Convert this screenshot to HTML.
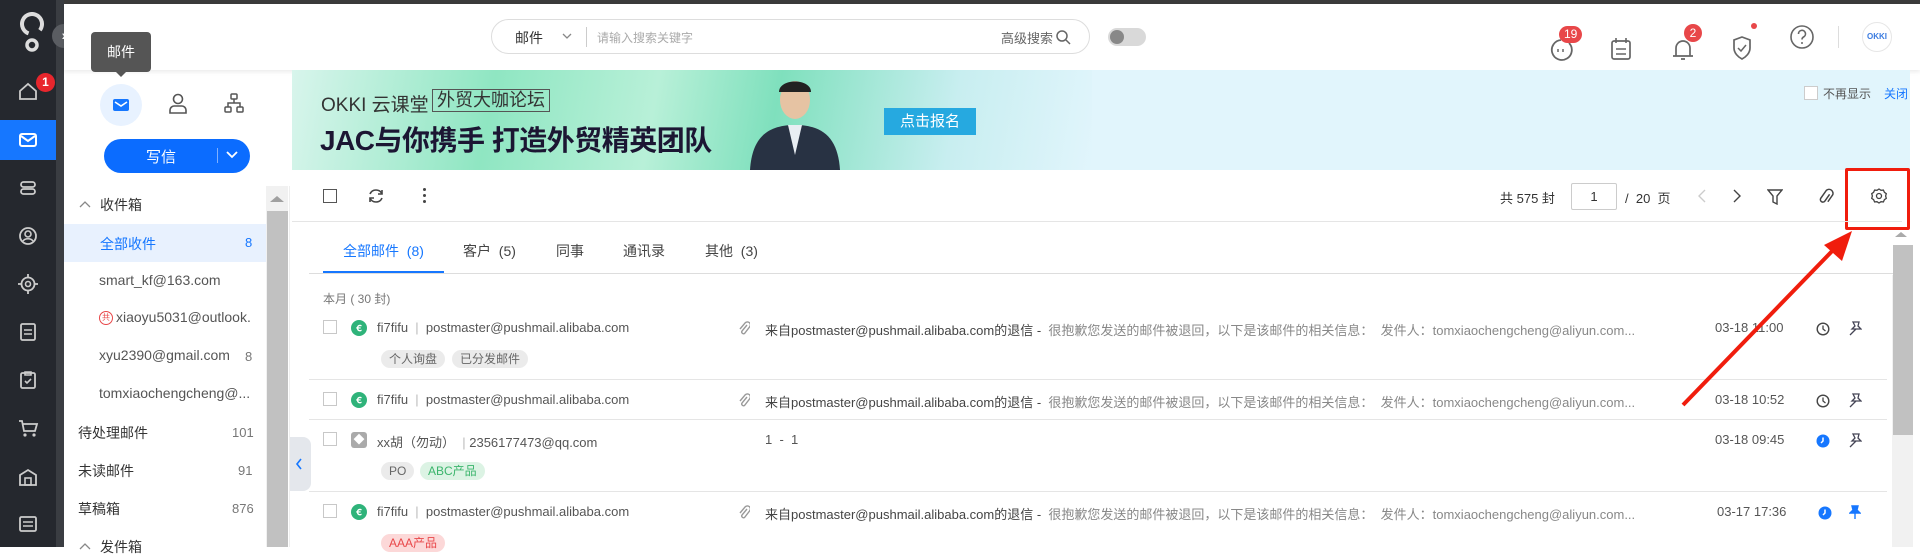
<!DOCTYPE html>
<html><head><meta charset="utf-8"><style>
*{margin:0;padding:0;box-sizing:border-box}
body{width:1920px;height:547px;overflow:hidden;background:#fff;font-family:"Liberation Sans","Noto Sans CJK SC",sans-serif;color:#333;position:relative}
.a{position:absolute;white-space:nowrap}
.nav{left:0;top:0;width:56px;height:547px;background:#25282e}
.navs{left:56px;top:0;width:8px;height:547px;background:#3a3d42}
.ni{position:absolute;left:17px;width:22px;height:22px}
.sb{font-size:14px;color:#333}
.cnt{font-size:13px;color:#777}
.t13{font-size:13px;color:#555}
.cb{position:absolute;width:14px;height:14px;border:1px solid #c8c8c8;background:#fff}
.tag{position:absolute;height:18px;line-height:18px;font-size:12px;border-radius:9px;padding:0 8px;background:#ebebeb;color:#666}
.sep{position:absolute;left:309px;width:1578px;height:1px;background:#e5e5e5}
.av{position:absolute;width:16px;height:16px;border-radius:50%;background:#2fb37a;color:#fff;font-size:11px;font-weight:bold;text-align:center;line-height:16px}
</style></head><body>
<div class="a" style="left:0;top:0;width:1920px;height:4px;background:#3b3b3b"></div>
<div class="a nav"></div><div class="a navs"></div>
<svg class="a" style="left:18px;top:12px" width="28" height="40" viewBox="0 0 28 40"><circle cx="14" cy="12" r="10" fill="none" stroke="#ddd" stroke-width="4" stroke-dasharray="50 13" transform="rotate(110 14 12)"/><circle cx="14" cy="33" r="5" fill="none" stroke="#ddd" stroke-width="3.5"/></svg>
<div class="a" style="left:52px;top:24px;width:24px;height:24px;border-radius:50%;background:#5a5d62;color:#fff;font-size:14px;text-align:center;line-height:23px;font-weight:bold">›</div>
<svg class="ni" style="top:80px" viewBox="0 0 22 22"><path d="M3 11L11 4l8 7v8H3z" fill="none" stroke="#ccc" stroke-width="1.8"/></svg>
<div class="a" style="left:36px;top:73px;width:19px;height:19px;border-radius:50%;background:#e8262d;color:#fff;font-size:12px;text-align:center;line-height:19px;font-weight:bold">1</div>
<div class="a" style="left:0;top:120px;width:56px;height:40px;background:#1677ff"></div>
<svg class="ni" style="top:129px" viewBox="0 0 22 22"><rect x="3" y="5" width="16" height="12" rx="2" fill="none" stroke="#fff" stroke-width="2"/><path d="M4 7l7 5 7-5" fill="none" stroke="#fff" stroke-width="2"/></svg>
<svg class="ni" style="top:177px" viewBox="0 0 22 22"><rect x="4" y="5" width="14" height="5" rx="2.5" fill="none" stroke="#ccc" stroke-width="1.8"/><rect x="4" y="12" width="14" height="5" rx="2.5" fill="none" stroke="#ccc" stroke-width="1.8"/></svg>
<svg class="ni" style="top:225px" viewBox="0 0 22 22"><circle cx="11" cy="11" r="8" fill="none" stroke="#ccc" stroke-width="1.8"/><circle cx="11" cy="9" r="3" fill="none" stroke="#ccc" stroke-width="1.6"/><path d="M6 16c2-3 8-3 10 0" fill="none" stroke="#ccc" stroke-width="1.6"/></svg>
<svg class="ni" style="top:273px" viewBox="0 0 22 22"><circle cx="11" cy="11" r="6.5" fill="none" stroke="#ccc" stroke-width="1.8"/><circle cx="11" cy="11" r="2.5" fill="none" stroke="#ccc" stroke-width="1.6"/><path d="M11 1v3M11 18v3M1 11h3M18 11h3" stroke="#ccc" stroke-width="1.8"/></svg>
<svg class="ni" style="top:321px" viewBox="0 0 22 22"><rect x="4" y="3" width="14" height="16" rx="1.5" fill="none" stroke="#ccc" stroke-width="1.8"/><path d="M7 9h8M7 13h8" stroke="#ccc" stroke-width="1.6"/></svg>
<svg class="ni" style="top:369px" viewBox="0 0 22 22"><rect x="4" y="4" width="14" height="15" rx="1.5" fill="none" stroke="#ccc" stroke-width="1.8"/><path d="M8 3h6v3H8zM8 12l2 2 4-4" fill="none" stroke="#ccc" stroke-width="1.6"/></svg>
<svg class="ni" style="top:417px" viewBox="0 0 22 22"><path d="M2 4h3l2 10h11l2-7H6" fill="none" stroke="#ccc" stroke-width="1.8"/><circle cx="8" cy="18" r="1.6" fill="#ccc"/><circle cx="17" cy="18" r="1.6" fill="#ccc"/></svg>
<svg class="ni" style="top:466px" viewBox="0 0 22 22"><path d="M3 9l8-5 8 5v10H3z" fill="none" stroke="#ccc" stroke-width="1.8"/><rect x="8" y="12" width="6" height="7" fill="none" stroke="#ccc" stroke-width="1.6"/></svg>
<svg class="ni" style="top:513px" viewBox="0 0 22 22"><rect x="3" y="4" width="16" height="14" rx="1.5" fill="none" stroke="#ccc" stroke-width="1.8"/><path d="M6 9h10M6 13h10" stroke="#ccc" stroke-width="1.6"/></svg>
<div class="a" style="left:64px;top:4px;width:1856px;height:66px;background:#fff;box-shadow:0 2px 4px rgba(0,0,0,.08)"></div>
<div class="a" style="left:491px;top:19px;width:599px;height:35px;border:1px solid #ddd;border-radius:18px"></div>
<div class="a" style="left:515px;top:28px;font-size:14px;color:#333">邮件</div>
<svg class="a" style="left:562px;top:32px" width="10" height="8"><path d="M1 2l4 4 4-4" fill="none" stroke="#888" stroke-width="1.3"/></svg>
<div class="a" style="left:586px;top:27px;width:1px;height:20px;background:#ccc"></div>
<div class="a" style="left:597px;top:29px;font-size:12px;color:#aaa">请输入搜索关键字</div>
<div class="a" style="left:1001px;top:28px;font-size:13px;color:#666">高级搜索</div>
<svg class="a" style="left:1055px;top:29px" width="16" height="16"><circle cx="7" cy="7" r="5" fill="none" stroke="#666" stroke-width="1.5"/><path d="M11 11l4 4" stroke="#666" stroke-width="1.5"/></svg>
<div class="a" style="left:1108px;top:28px;width:38px;height:18px;border-radius:9px;background:#d9d9d9"></div>
<div class="a" style="left:1110px;top:30px;width:14px;height:14px;border-radius:50%;background:#888"></div>
<svg class="a" style="left:1549px;top:37px" width="24" height="26"><path d="M20 6a10 10 0 1 1-8-3" fill="none" stroke="#666" stroke-width="1.8"/><path d="M9 12v3M14 12v3" stroke="#666" stroke-width="1.5"/></svg>
<div class="a" style="left:1559px;top:26px;height:17px;padding:0 5px;border-radius:9px;background:#e84749;color:#fff;font-size:12px;line-height:17px">19</div>
<svg class="a" style="left:1610px;top:37px" width="22" height="24"><rect x="2" y="4" width="18" height="18" rx="2" fill="none" stroke="#666" stroke-width="1.7"/><path d="M6 1v5M16 1v5M6 12h10M6 17h10" stroke="#666" stroke-width="1.6"/></svg>
<svg class="a" style="left:1671px;top:36px" width="24" height="26"><path d="M5 20V12a7 7 0 0 1 14 0v8zM2 20h20M10 23h4" fill="none" stroke="#666" stroke-width="1.7"/></svg>
<div class="a" style="left:1684px;top:24px;width:18px;height:18px;border-radius:50%;background:#e84749;color:#fff;font-size:12px;text-align:center;line-height:18px">2</div>
<svg class="a" style="left:1731px;top:35px" width="22" height="26"><path d="M11 2l8 3v8c0 5-4 9-8 11-4-2-8-6-8-11V5z" fill="none" stroke="#666" stroke-width="1.7"/><path d="M7 13l3 3 5-6" fill="none" stroke="#666" stroke-width="1.5"/></svg>
<div class="a" style="left:1751px;top:23px;width:6px;height:6px;border-radius:50%;background:#e84749"></div>
<svg class="a" style="left:1789px;top:24px" width="26" height="26"><circle cx="13" cy="13" r="11" fill="none" stroke="#666" stroke-width="1.6"/><path d="M9.5 10a3.5 3.5 0 1 1 5 3c-1.2.7-1.5 1.3-1.5 2.5" fill="none" stroke="#666" stroke-width="1.6"/><circle cx="13" cy="19" r="1" fill="#666"/></svg>
<div class="a" style="left:1838px;top:26px;width:1px;height:22px;background:#ddd"></div>
<div class="a" style="left:1862px;top:22px;width:30px;height:30px;border-radius:50%;border:1px solid #e6e6e6;color:#3a7be0;font-size:8px;font-weight:bold;text-align:center;line-height:28px">OKKI</div>
<div class="a" style="left:91px;top:32px;width:60px;height:40px;background:#555;border-radius:4px;color:#fff;font-size:14px;text-align:center;line-height:40px">邮件</div>
<div class="a" style="left:116px;top:72px;border:5px solid transparent;border-top-color:#555"></div>
<div class="a" style="left:100px;top:84px;width:42px;height:42px;border-radius:50%;background:#e8f2ff"></div>
<svg class="a" style="left:112px;top:97px" width="18" height="16"><rect x="1" y="2" width="16" height="12" rx="2" fill="#1677ff"/><path d="M3 5l6 4 6-4" fill="none" stroke="#fff" stroke-width="1.6"/></svg>
<svg class="a" style="left:168px;top:93px" width="20" height="22"><circle cx="10" cy="6" r="4.5" fill="none" stroke="#555" stroke-width="1.6"/><path d="M2 20v-3c0-2 2-4 4-4h8c2 0 4 2 4 4v3z" fill="none" stroke="#555" stroke-width="1.6"/></svg>
<svg class="a" style="left:224px;top:93px" width="20" height="20"><rect x="7" y="1" width="6" height="5" rx="1" fill="none" stroke="#555" stroke-width="1.5"/><rect x="1" y="14" width="6" height="5" rx="1" fill="none" stroke="#555" stroke-width="1.5"/><rect x="13" y="14" width="6" height="5" rx="1" fill="none" stroke="#555" stroke-width="1.5"/><path d="M10 6v4M4 14v-4h12v4" fill="none" stroke="#555" stroke-width="1.5"/></svg>
<div class="a" style="left:104px;top:139px;width:146px;height:34px;border-radius:17px;background:#0b6cff"></div>
<div class="a" style="left:146px;top:146px;color:#fff;font-size:15px">写信</div>
<div class="a" style="left:217px;top:148px;width:1px;height:15px;background:#7fb0ff"></div>
<svg class="a" style="left:226px;top:151px" width="12" height="8"><path d="M1 1l5 5 5-5" fill="none" stroke="#fff" stroke-width="1.8"/></svg>
<svg class="a" style="left:79px;top:200px" width="12" height="8"><path d="M1 7l5-5 5 5" fill="none" stroke="#888" stroke-width="1.3"/></svg>
<div class="a sb" style="left:100px;top:195px">收件箱</div>
<div class="a" style="left:64px;top:224px;width:202px;height:38px;background:#e8f1fe"></div>
<div class="a sb" style="left:100px;top:234px;color:#1677ff">全部收件</div>
<div class="a cnt" style="left:245px;top:235px;color:#1677ff">8</div>
<div class="a sb" style="left:99px;top:272px;color:#555">smart_kf@163.com</div>
<div class="a" style="left:99px;top:311px;width:14px;height:14px;border-radius:50%;border:1.5px solid #e84749;color:#e84749;font-size:8px;text-align:center;line-height:11px">共</div>
<div class="a sb" style="left:116px;top:309px;color:#555;width:135px;overflow:hidden">xiaoyu5031@outlook.com</div>
<div class="a sb" style="left:99px;top:347px;color:#555">xyu2390@gmail.com</div>
<div class="a cnt" style="left:245px;top:349px">8</div>
<div class="a sb" style="left:99px;top:385px;color:#555">tomxiaochengcheng@...</div>
<div class="a sb" style="left:78px;top:423px">待处理邮件</div><div class="a cnt" style="left:232px;top:425px">101</div>
<div class="a sb" style="left:78px;top:461px">未读邮件</div><div class="a cnt" style="left:238px;top:463px">91</div>
<div class="a sb" style="left:78px;top:499px">草稿箱</div><div class="a cnt" style="left:232px;top:501px">876</div>
<svg class="a" style="left:79px;top:542px" width="12" height="8"><path d="M1 7l5-5 5 5" fill="none" stroke="#888" stroke-width="1.3"/></svg>
<div class="a sb" style="left:100px;top:537px">发件箱</div>
<div class="a" style="left:266px;top:186px;width:22px;height:361px;background:#f1f1f1"></div>
<div class="a" style="left:270px;top:196px;border:7px solid transparent;border-bottom:6px solid #a0a0a0;border-top:0"></div>
<div class="a" style="left:267px;top:211px;width:21px;height:336px;background:#c1c1c1"></div>
<div class="a" style="left:289px;top:186px;width:1px;height:361px;background:#eee"></div>
<!-- banner -->
<div class="a" style="left:292px;top:70px;width:1618px;height:100px;background:#e1f5fc"></div>
<div class="a" style="left:292px;top:70px;width:800px;height:100px;background:linear-gradient(100deg,#d8f5ec 0%,#8fe6c2 25%,#b8f0d8 45%,#7fe0bd 60%,#c8eef0 82%,#e1f5fc 100%)"></div>
<div class="a" style="left:321px;top:90px;font-size:19px;color:#333">OKKI 云课堂</div>
<div class="a" style="left:432px;top:89px;height:23px;border:1px solid #555;font-size:18px;line-height:21px;padding:0 4px;color:#333">外贸大咖论坛</div>
<div class="a" style="left:320px;top:119px;font-size:28px;font-weight:bold;color:#1c1633;letter-spacing:-0.5px">JAC与你携手 打造外贸精英团队</div>
<svg class="a" style="left:745px;top:72px" width="100" height="98"><ellipse cx="50" cy="28" rx="15" ry="19" fill="#e6c3a3"/><path d="M34 20c0-14 32-14 32 0" fill="#222"/><path d="M5 98c2-30 15-45 45-45s43 15 45 45z" fill="#283243"/><path d="M43 53l7 30 7-30z" fill="#e9eef3"/></svg>
<div class="a" style="left:884px;top:108px;width:92px;height:27px;background:#26a9e0;color:#fff;font-size:15px;text-align:center;line-height:27px">点击报名</div>
<div class="a cb" style="left:1804px;top:86px;border-color:#ccc"></div>
<div class="a" style="left:1823px;top:85px;font-size:12px;color:#555">不再显示</div>
<div class="a" style="left:1884px;top:85px;font-size:12px;color:#1677ff">关闭</div>
<!-- toolbar -->
<div class="a cb" style="left:323px;top:189px;border:1.5px solid #555"></div>
<svg class="a" style="left:367px;top:187px" width="18" height="18"><path d="M15 7a6.5 6.5 0 0 0-12 0M3 11a6.5 6.5 0 0 0 12 0" fill="none" stroke="#444" stroke-width="1.6"/><path d="M15 3v4h-4M3 15v-4h4" fill="none" stroke="#444" stroke-width="1.6"/></svg>
<div class="a" style="left:423px;top:188px;width:3px;height:3px;border-radius:50%;background:#444;box-shadow:0 6px 0 #444,0 12px 0 #444"></div>
<div class="a" style="left:1500px;top:188px;font-size:13px;color:#333">共 575 封</div>
<div class="a" style="left:1571px;top:183px;width:46px;height:27px;border:1px solid #ccc;border-radius:2px;font-size:13px;text-align:center;line-height:25px">1</div>
<div class="a" style="left:1625px;top:188px;font-size:13px;color:#333">/ &nbsp;20 &nbsp;页</div>
<svg class="a" style="left:1697px;top:189px" width="10" height="14"><path d="M8 1L2 7l6 6" fill="none" stroke="#ccc" stroke-width="1.4"/></svg>
<svg class="a" style="left:1732px;top:189px" width="10" height="14"><path d="M2 1l6 6-6 6" fill="none" stroke="#444" stroke-width="1.4"/></svg>
<svg class="a" style="left:1767px;top:189px" width="16" height="16"><path d="M1 1h14l-5 6v8l-4-2V7z" fill="none" stroke="#444" stroke-width="1.4"/></svg>
<svg class="a" style="left:1818px;top:188px" width="16" height="18"><path d="M12 7l-6 6a2.5 2.5 0 0 1-3.5-3.5l7-7a4 4 0 0 1 5.5 5.5L9 14" fill="none" stroke="#444" stroke-width="1.5" transform="rotate(-10 8 9)"/></svg>
<svg class="a" style="left:1871px;top:188px" width="16" height="16"><path d="M8 1l2 1.3 2.4-.2 1 2.2 1.9 1.4-.7 2.3.7 2.3-1.9 1.4-1 2.2-2.4-.2L8 15l-2-1.3-2.4.2-1-2.2L.7 10.3 1.4 8 .7 5.7l1.9-1.4 1-2.2L6 2.3z" fill="none" stroke="#444" stroke-width="1.3"/><circle cx="8" cy="8" r="2.5" fill="none" stroke="#444" stroke-width="1.3"/></svg>
<div class="a" style="left:1845px;top:168px;width:65px;height:62px;border:3.5px solid #f01d0d;border-radius:2px"></div>
<div class="a" style="left:292px;top:221px;width:1610px;height:1px;background:#e5e5e5"></div>
<div class="a" style="left:343px;top:241px;font-size:14px;color:#1677ff">全部邮件 &nbsp;(8)</div>
<div class="a" style="left:463px;top:241px;font-size:14px;color:#444">客户 &nbsp;(5)</div>
<div class="a" style="left:556px;top:241px;font-size:14px;color:#444">同事</div>
<div class="a" style="left:623px;top:241px;font-size:14px;color:#444">通讯录</div>
<div class="a" style="left:705px;top:241px;font-size:14px;color:#444">其他 &nbsp;(3)</div>
<div class="a" style="left:309px;top:273px;width:1593px;height:1px;background:#ddd"></div>
<div class="a" style="left:323px;top:271px;width:121px;height:2px;background:#1677ff"></div>
<div class="a" style="left:1892px;top:275px;width:21px;height:272px;background:#f1f1f1"></div>
<div class="a" style="left:1895px;top:232px;border:6px solid transparent;border-bottom:5px solid #aaa;border-top:0"></div>
<div class="a" style="left:1893px;top:245px;width:20px;height:190px;background:#c1c1c1"></div>
<div class="a" style="left:323px;top:290px;font-size:12px;color:#777">本月 ( 30 封)</div>
<div class="a cb" style="left:323px;top:320px"></div>
<div class="av" style="left:351px;top:320px">ꞓ</div>
<div class="a t13" style="left:377px;top:320px">fi7fifu &nbsp;<span style="color:#bbb">|</span>&nbsp; postmaster@pushmail.alibaba.com</div>
<div class="tag" style="left:381px;top:350px">个人询盘</div><div class="tag" style="left:452px;top:350px">已分发邮件</div>
<div class="a cb" style="left:323px;top:392px"></div>
<div class="av" style="left:351px;top:392px">ꞓ</div>
<div class="a t13" style="left:377px;top:392px">fi7fifu &nbsp;<span style="color:#bbb">|</span>&nbsp; postmaster@pushmail.alibaba.com</div>
<div class="a cb" style="left:323px;top:432px"></div>
<div class="av" style="left:351px;top:432px;border-radius:3px;background:#aaa">◆</div>
<div class="a t13" style="left:377px;top:432px">xx胡（勿动） &nbsp;<span style="color:#bbb">|</span> 2356177473@qq.com</div>
<div class="tag" style="left:381px;top:462px">PO</div><div class="tag" style="left:420px;top:462px;background:#dcf3e4;color:#3bb56c">ABC产品</div>
<div class="a cb" style="left:323px;top:504px"></div>
<div class="av" style="left:351px;top:504px">ꞓ</div>
<div class="a t13" style="left:377px;top:504px">fi7fifu &nbsp;<span style="color:#bbb">|</span>&nbsp; postmaster@pushmail.alibaba.com</div>
<div class="tag" style="left:381px;top:534px;background:#fcd8d8;color:#e84749">AAA产品</div>
<div class="sep" style="top:379px"></div><div class="sep" style="top:419px"></div><div class="sep" style="top:491px"></div>
<div class="a t13" style="left:765px;top:320px;width:925px;overflow:hidden;color:#444">来自postmaster@pushmail.alibaba.com的退信 - &nbsp;<span style="color:#888">很抱歉您发送的邮件被退回，以下是该邮件的相关信息： &nbsp;发件人：tomxiaochengcheng@aliyun.com...</span></div>
<div class="a t13" style="left:765px;top:392px;width:925px;overflow:hidden;color:#444">来自postmaster@pushmail.alibaba.com的退信 - &nbsp;<span style="color:#888">很抱歉您发送的邮件被退回，以下是该邮件的相关信息： &nbsp;发件人：tomxiaochengcheng@aliyun.com...</span></div>
<div class="a t13" style="left:765px;top:432px">1 &nbsp;- &nbsp;1</div>
<div class="a t13" style="left:765px;top:504px;width:925px;overflow:hidden;color:#444">来自postmaster@pushmail.alibaba.com的退信 - &nbsp;<span style="color:#888">很抱歉您发送的邮件被退回，以下是该邮件的相关信息： &nbsp;发件人：tomxiaochengcheng@aliyun.com...</span></div>
<svg class="a" style="left:738px;top:320px" width="12" height="16"><path d="M9 5l-5 6a1.8 1.8 0 0 0 2.6 2.4l5-6.5a3 3 0 0 0-4.5-4L2 9" fill="none" stroke="#999" stroke-width="1.4"/></svg>
<svg class="a" style="left:738px;top:392px" width="12" height="16"><path d="M9 5l-5 6a1.8 1.8 0 0 0 2.6 2.4l5-6.5a3 3 0 0 0-4.5-4L2 9" fill="none" stroke="#999" stroke-width="1.4"/></svg>
<svg class="a" style="left:738px;top:504px" width="12" height="16"><path d="M9 5l-5 6a1.8 1.8 0 0 0 2.6 2.4l5-6.5a3 3 0 0 0-4.5-4L2 9" fill="none" stroke="#999" stroke-width="1.4"/></svg>
<div class="a t13" style="left:1715px;top:320px">03-18 11:00</div>
<div class="a t13" style="left:1715px;top:392px">03-18 10:52</div>
<div class="a t13" style="left:1715px;top:432px">03-18 09:45</div>
<div class="a t13" style="left:1717px;top:504px">03-17 17:36</div>
<svg class="a" style="left:1816px;top:322px" width="14" height="14"><circle cx="7" cy="7" r="5.8" fill="none" stroke="#444" stroke-width="1.4"/><path d="M7 3.5V7l2.5 2" fill="none" stroke="#444" stroke-width="1.3"/></svg>
<svg class="a" style="left:1816px;top:394px" width="14" height="14"><circle cx="7" cy="7" r="5.8" fill="none" stroke="#444" stroke-width="1.4"/><path d="M7 3.5V7l2.5 2" fill="none" stroke="#444" stroke-width="1.3"/></svg>
<svg class="a" style="left:1816px;top:434px" width="14" height="14"><circle cx="7" cy="7" r="6.5" fill="#1677ff"/><path d="M7 3.5V7l-2 2" fill="none" stroke="#fff" stroke-width="1.5"/></svg>
<svg class="a" style="left:1818px;top:506px" width="14" height="14"><circle cx="7" cy="7" r="6.5" fill="#1677ff"/><path d="M7 3.5V7l-2 2" fill="none" stroke="#fff" stroke-width="1.5"/></svg>
<svg class="a" style="left:1848px;top:321px" width="14" height="15"><path d="M5 1h6l-1 4 3 3H4l3-3zM8 8L2 14" fill="none" stroke="#445" stroke-width="1.3"/></svg>
<svg class="a" style="left:1848px;top:393px" width="14" height="15"><path d="M5 1h6l-1 4 3 3H4l3-3zM8 8L2 14" fill="none" stroke="#445" stroke-width="1.3"/></svg>
<svg class="a" style="left:1848px;top:433px" width="14" height="15"><path d="M5 1h6l-1 4 3 3H4l3-3zM8 8L2 14" fill="none" stroke="#445" stroke-width="1.3"/></svg>
<svg class="a" style="left:1849px;top:505px" width="12" height="15"><path d="M3 1h6l-1 4 3 3H1l3-3zM6 8v6" fill="#1677ff" stroke="#1677ff" stroke-width="1.4"/></svg>
<div class="a" style="left:290px;top:437px;width:21px;height:54px;background:#e4e7ec;border-radius:0 8px 8px 0"></div>
<svg class="a" style="left:295px;top:458px" width="8" height="12"><path d="M6 1L2 6l4 5" fill="none" stroke="#1677ff" stroke-width="1.6"/></svg>
<svg class="a" style="left:1670px;top:225px" width="200" height="190"><path d="M13 180L168 20" stroke="#f01d0d" stroke-width="4"/><path d="M182 6L154 20L172 36z" fill="#f01d0d"/></svg>
</body></html>
